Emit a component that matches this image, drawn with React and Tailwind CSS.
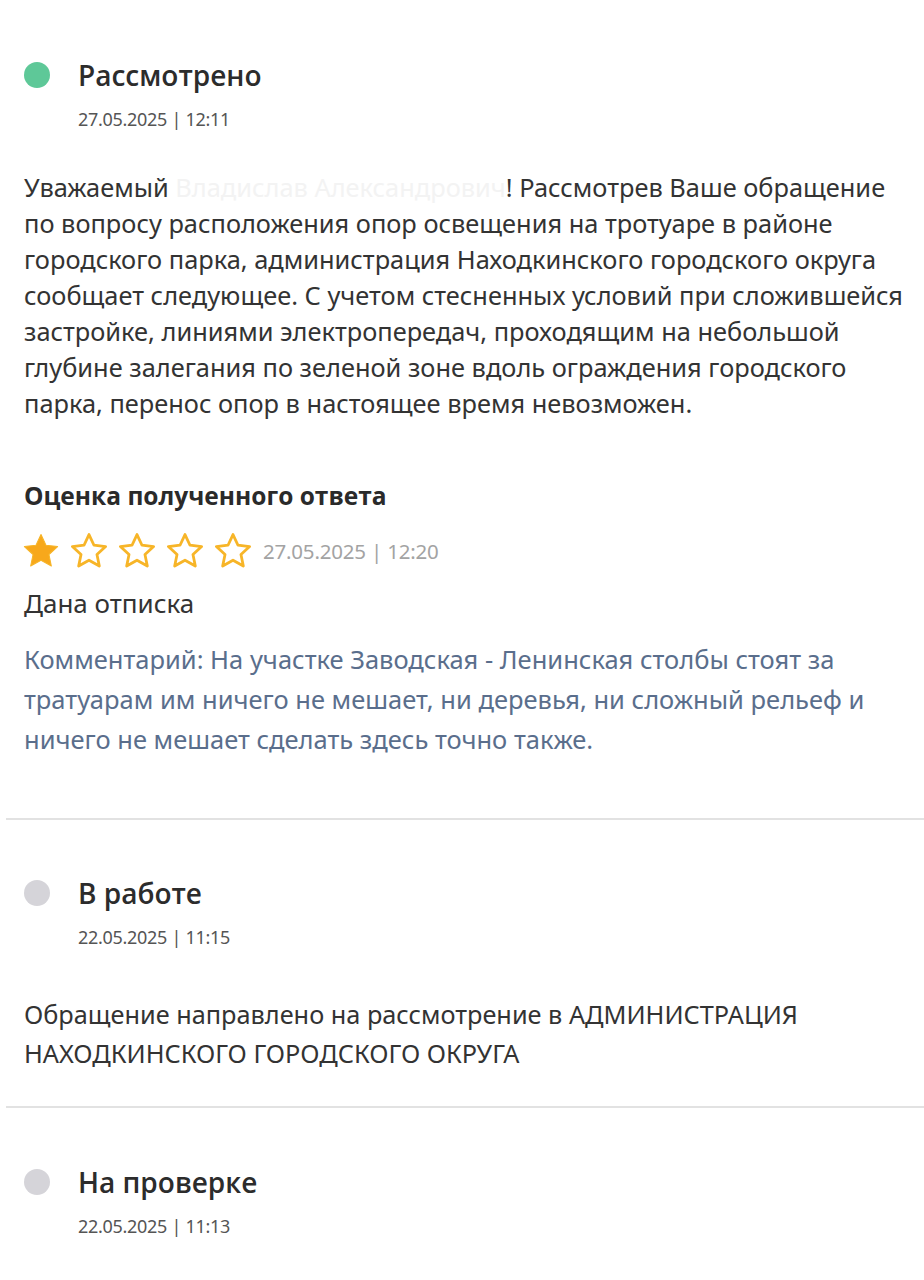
const body = { fontFamily: '"Noto Sans", "Open Sans", sans-serif' };
const head = { fontFamily: '"Open Sans", "Noto Sans", sans-serif' };

function Star({ filled }) {
	return (
		<svg width="42" height="42" viewBox="0 0 24 24">
			<path
				d="M12 2.6l2.85 6.1 6.65.75-4.95 4.55 1.35 6.6L12 17.3l-5.9 3.3 1.35-6.6L2.5 9.45l6.65-.75z"
				fill={filled ? "#f7a81b" : "none"}
				stroke="#f7b528"
				strokeWidth={filled ? 0.6 : 1.6}
				strokeLinejoin="round"
			/>
		</svg>
	);
}

function Status({ dot, title, date, children }) {
	return (
		<section>
			<div className="flex items-center">
				<span className={`w-[26px] h-[26px] rounded-full ${dot} ml-[24px]`} />
				<h3
					className="ml-[28px] text-[28px] font-semibold text-[#2c2c2c] leading-[34px]"
					style={head}
				>
					{title}
				</h3>
			</div>
			<div
				className="ml-[78px] mt-[15px] text-[18px] tracking-[-0.3px] text-[#555] leading-[24px]"
				style={body}
			>
				{date}
			</div>
			{children}
		</section>
	);
}

export default function App() {
	return (
		<main className="w-[924px] bg-white pt-[58px] pb-[40px]">
			<Status dot="bg-[#5ec898]" title="Рассмотрено" date="27.05.2025 | 12:11">
				<p
					className="mt-[38px] pl-[24px] pr-[12px] text-[25.4px] leading-[36px] text-[#333]"
					style={body}
				>
					Уважаемый <span className="text-[#f3f3f3]">Владислав Александрович</span>! Рассмотрев Ваше обращение по вопросу расположения опор освещения на тротуаре в районе городского парка, администрация Находкинского городского округа сообщает следующее. С учетом стесненных условий при сложившейся застройке, линиями электропередач, проходящим на небольшой глубине залегания по зеленой зоне вдоль ограждения городского парка, перенос опор в настоящее время невозможен.
				</p>

				<h4
					className="mt-[60px] px-[24px] text-[24.5px] font-bold text-[#2a2a2a] leading-[30px]"
					style={head}
				>
					Оценка полученного ответа
				</h4>
				<div className="mt-[19px] ml-[20px] flex items-center">
					<div className="flex gap-[6px]">
						<Star filled />
						<Star />
						<Star />
						<Star />
						<Star />
					</div>
					<span
						className="ml-[9px] text-[20.5px] text-[#a3a3a3] tracking-[-0.2px]"
						style={body}
					>
						27.05.2025 | 12:20
					</span>
				</div>
				<div
					className="mt-[15px] px-[24px] text-[26px] text-[#333] leading-[32px]"
					style={body}
				>
					Дана отписка
				</div>
				<p
					className="mt-[20px] px-[24px] text-[25.5px] leading-[40px] text-[#5a6e8c]"
					style={body}
				>
					Комментарий: На участке Заводская - Ленинская столбы стоят за тратуарам им ничего не мешает, ни деревья, ни сложный рельеф и ничего не мешает сделать здесь точно также.
				</p>
			</Status>

			<hr className="mt-[59px] ml-[6px] border-t-2 border-[#e2e2e2]" />

			<div className="mt-[56px]">
				<Status dot="bg-[#d5d4d9]" title="В работе" date="22.05.2025 | 11:15">
					<p
						className="mt-[46px] px-[24px] text-[25.3px] leading-[39px] text-[#333]"
						style={body}
					>
						Обращение направлено на рассмотрение в АДМИНИСТРАЦИЯ НАХОДКИНСКОГО ГОРОДСКОГО ОКРУГА
					</p>
				</Status>
			</div>

			<hr className="mt-[33px] ml-[6px] border-t-2 border-[#e2e2e2]" />

			<div className="mt-[57px]">
				<Status dot="bg-[#d5d4d9]" title="На проверке" date="22.05.2025 | 11:13" />
			</div>
		</main>
	);
}
